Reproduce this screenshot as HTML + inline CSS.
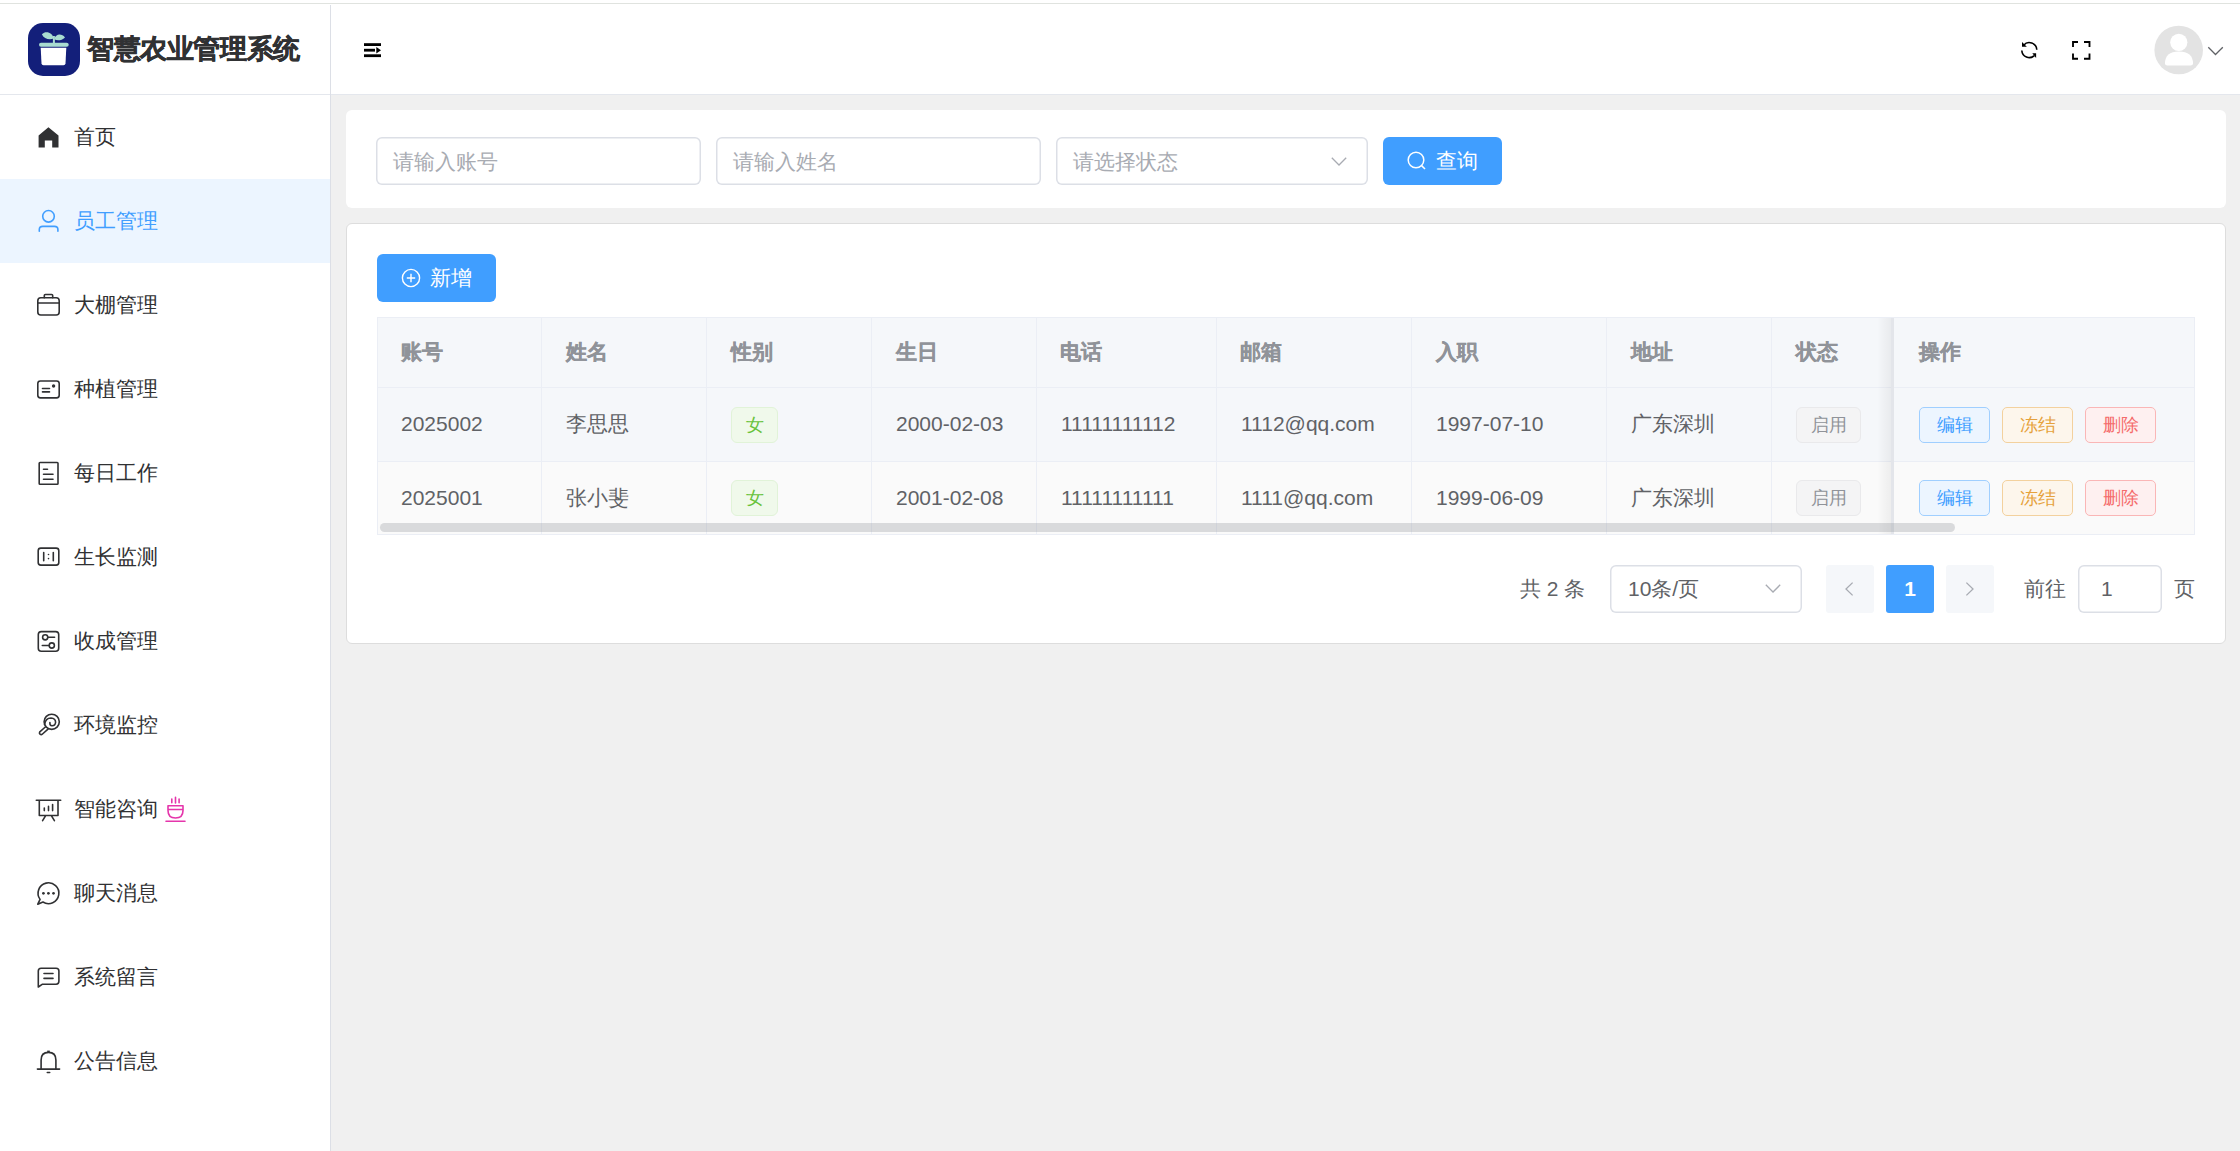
<!DOCTYPE html>
<html><head><meta charset="utf-8">
<style>
*{box-sizing:border-box;margin:0;padding:0}
html,body{width:2240px;height:1151px;overflow:hidden;background:#fff;font-family:"Liberation Sans",sans-serif;color:#303133}
.abs{position:absolute}
#topline{position:absolute;left:0;top:3px;width:2240px;height:1px;background:#e0e3df}
#aside{position:absolute;left:0;top:4px;width:331px;height:1147px;background:#fff;border-right:1px solid #dcdfe6}
#logo{position:absolute;left:0;top:0;width:330px;height:91px;border-bottom:1px solid #e4e7ed}
#logo .title{position:absolute;left:87px;letter-spacing:-0.4px;top:27px;-webkit-text-stroke:0.5px #303133;font-size:27px;font-weight:bold;color:#303133;line-height:36px;white-space:nowrap}
.menu{position:absolute;left:0;width:330px;height:84px}
.menu.active{background:#ecf5ff}
.menu .t{position:absolute;left:74px;top:0;line-height:84px;font-size:21px;color:#303133;white-space:nowrap}
.menu.active .t{color:#409eff}
.menu svg{position:absolute;left:0;top:0}
#header{position:absolute;left:331px;top:4px;width:1909px;height:91px;background:#fff;border-bottom:1px solid #e4e7ed}
#main{position:absolute;left:331px;top:95px;width:1909px;height:1056px;background:#f0f0f0}
.card{position:absolute;background:#fff;border-radius:6px}
.inp{position:absolute;height:48px;box-shadow:inset 0 0 0 1.5px #dcdfe6;border-radius:6px;background:#fff}
.inp .ph{position:absolute;left:17px;top:1px;line-height:48px;font-size:21px;color:#a8abb2;white-space:nowrap}
.btn{position:absolute;height:48px;border-radius:6px;background:#409eff;color:#fff;font-size:21px}
.btn .t{position:absolute;line-height:48px;top:0;white-space:nowrap}
table{border-collapse:collapse}
.th{position:absolute;font-size:21px;font-weight:bold;color:#909399;-webkit-text-stroke:0.3px #909399;line-height:30px;white-space:nowrap}
.td{position:absolute;font-size:21px;color:#606266;line-height:30px;white-space:nowrap}
.vl{position:absolute;width:1px;background:#ebeef5}
.hl{position:absolute;height:1px;background:#ebeef5}
.tag{position:absolute;height:36px;border-radius:6px;font-size:18px;line-height:34px;text-align:center;border:1px solid}
.tg{background:#f0f9eb;border-color:#e1f3d8;color:#67c23a}
.ti{background:#f4f4f5;border-color:#e9e9eb;color:#909399}
.ob{position:absolute;height:36px;width:71px;border-radius:5px;font-size:18px;line-height:34px;text-align:center;border:1px solid}
.ob.p{background:#ecf5ff;border-color:#a0cfff;color:#409eff}
.ob.w{background:#fdf6ec;border-color:#f3d19e;color:#e6a23c}
.ob.d{background:#fef0f0;border-color:#fab6b6;color:#f56c6c}
.pg{position:absolute;font-size:21px;color:#606266;line-height:30px;white-space:nowrap}
</style></head><body>
<div id="topline"></div>

<div id="aside">
  <div id="logo">
    <svg class="abs" style="left:28px;top:19px" width="52" height="53" viewBox="0 0 52 53">
      <rect x="0" y="0" width="52" height="53" rx="15" fill="#131f7a"/>
      <path d="M12.7 24.8 L38.3 24.8 L37.5 40.5 Q37.3 42.2 35.5 42.2 L15.5 42.2 Q13.7 42.2 13.5 40.5 Z" fill="#fff"/>
      <rect x="11" y="19.7" width="29.7" height="4" rx="2" fill="#a9dcd0"/>
      <rect x="24.9" y="13" width="2" height="7" fill="#a9dcd0"/>
      <path d="M25.6 15.6 C24.8 9.2 17.5 7.3 13.9 11.2 C15.6 15.6 21.2 17.4 25.6 15.6Z" fill="#a9dcd0"/>
      <path d="M26.3 16.2 C27.6 10.6 33.6 10.2 37 14.4 C33.8 17.6 29 18 26.3 16.2Z" fill="#a9dcd0"/>
    </svg>
    <div class="title">智慧农业管理系统</div>
  </div>
</div>

<div class="menu" style="top:95px"><div class="t">首页</div></div>
<div class="menu active" style="top:179px"><div class="t">员工管理</div></div>
<div class="menu" style="top:263px"><div class="t">大棚管理</div></div>
<div class="menu" style="top:347px"><div class="t">种植管理</div></div>
<div class="menu" style="top:431px"><div class="t">每日工作</div></div>
<div class="menu" style="top:515px"><div class="t">生长监测</div></div>
<div class="menu" style="top:599px"><div class="t">收成管理</div></div>
<div class="menu" style="top:683px"><div class="t">环境监控</div></div>
<div class="menu" style="top:767px"><div class="t">智能咨询</div></div>
<div class="menu" style="top:851px"><div class="t">聊天消息</div></div>
<div class="menu" style="top:935px"><div class="t">系统留言</div></div>
<div class="menu" style="top:1019px"><div class="t">公告信息</div></div>
<svg class="abs" style="left:0;top:0;pointer-events:none" width="331" height="1151" viewBox="0 0 331 1151" fill="none" stroke="#303133" stroke-width="1.6" stroke-linecap="round" stroke-linejoin="round">
<path d="M48.4 127.3 L58.5 135.4 L58.5 147.6 L52.2 147.6 L52.2 140.6 L44.8 140.6 L44.8 147.6 L38.6 147.6 L38.6 135.4 Z" fill="#303133" stroke="none"/>
<g stroke="#409eff"><circle cx="48.5" cy="216.3" r="5.8"/><path d="M39.3 231.3 V229.5 Q39.3 226.4 42.8 226.4 H54.4 Q57.9 226.4 57.9 229.5 V231.3"/></g>
<rect x="37.8" y="297.8" width="21.4" height="17.2" rx="3"/><path d="M37.8 303 H59.2"/><path d="M44.3 297.8 V295.6 Q44.3 294.5 45.4 294.5 H51.6 Q52.7 294.5 52.7 295.6 V297.8"/>
<rect x="37.8" y="381" width="21.4" height="16.9" rx="2.6"/><path d="M42.5 388.5 H49.5 M42.5 391.9 H49.5"/><circle cx="53.6" cy="386" r="0.9" fill="#303133"/>
<rect x="39.2" y="462.5" width="18.8" height="21.7" rx="0.8"/><path d="M43.5 469.3 H47.5 M43.5 474.3 H53 M43.5 479.3 H53"/>
<rect x="38.2" y="548.1" width="20.6" height="17" rx="2.6"/><path d="M43.7 552.5 V560.8 M53.3 552.5 V560.8"/><circle cx="48.5" cy="554.5" r="0.8" fill="#303133" stroke="none"/><circle cx="48.5" cy="558.6" r="0.8" fill="#303133" stroke="none"/>
<rect x="38.3" y="631.6" width="20.4" height="19.6" rx="3"/><circle cx="45.2" cy="637.3" r="2.6"/><path d="M47.8 637.3 H54.6"/><circle cx="51.8" cy="645.5" r="2.6"/><path d="M49.2 645.5 H42.3"/>
<circle cx="51.7" cy="721.8" r="7.6"/><path d="M44.6 724.5 Q45.5 718 51 718 Q55.5 718.3 55.6 722.3 Q55.3 726 51.8 725.8 Q49.8 725.6 49.9 723.3 L49.9 722.6"/><path d="M45.3 727 L39.8 731.8 Q38.8 733.2 40.2 734.4 Q41.4 735 42.5 734 L48 729.2"/>
<path d="M36.3 800.2 H60.7 M39.3 800.2 V815.5 H58 V800.2 M44.3 808.1 V810.6 M48.5 806.4 V810.6 M52.6 804.5 V810.6 M45.5 815.8 L42.6 820.7 M51.5 815.8 L54.4 820.7"/>
<path d="M40.07 899.35 A10.4 10.4 0 1 1 42.94 902.03 L37.8 904.2 Z"/><circle cx="43.4" cy="893.3" r="1.35" fill="#303133" stroke="none"/><circle cx="48.4" cy="893.3" r="1.35" fill="#303133" stroke="none"/><circle cx="53.5" cy="893.3" r="1.35" fill="#303133" stroke="none"/>
<path d="M38.3 987 V971.1 Q38.3 968.3 41.1 968.3 H56.1 Q58.9 968.3 58.9 971.1 V981.3 Q58.9 984.2 56.1 984.2 H42.5 Z"/><path d="M44 973.5 H53 M44 978.4 H53"/>
<path d="M37.4 1069.1 H59.6 M41.1 1069 V1060 Q41.1 1052.4 48.5 1052.4 Q55.9 1052.4 55.9 1060 V1069 M47.3 1072.5 H49.7"/><path d="M48.5 1050.6 V1052.4" stroke-width="2.6" stroke-linecap="butt"/>
<g stroke="#e535ab"><path d="M171.8 799 V802.7 M175.5 797.2 V803 M179.1 799 V802.7 M168 805.7 H183 V810.5 Q183 818 175.5 818 Q168 818 168 810.5 Z M168 809.5 H183 M166 821.2 H185"/></g>
</svg>
<div id="header"></div>
<div class="abs" style="left:330px;top:4px;width:1px;height:1px;background:#fff"></div>
<svg class="abs" style="left:0;top:0" width="2240" height="95" viewBox="0 0 2240 95">
  <g fill="#000">
    <rect x="364" y="43.2" width="17" height="2.8"/>
    <rect x="364" y="48.8" width="11" height="2.8"/>
    <path d="M376.3 47 L381 50.2 L376.3 53.4 Z"/>
    <rect x="364" y="54.3" width="17" height="2.8"/>
  </g>
  <g fill="none" stroke="#000" stroke-width="1.6">
    <path d="M2036.79 49.71 A7.5 7.5 0 0 0 2023.64 45.18"/>
    <path d="M2021.81 50.49 A7.5 7.5 0 0 0 2034.35 55.64"/>
    <path d="M2073 47 V42 H2078 M2084 42 H2089.5 V47 M2073 53.5 V58.7 H2078 M2084 58.7 H2089.5 V53.5" stroke-width="1.85" stroke-linecap="butt" stroke-linejoin="miter"/>
  </g>
  <path d="M2022 42 L2022 46.8 L2026.8 46.8 Z" fill="#000"/>
  <path d="M2032.3 53.3 L2036.1 53.3 L2036.1 58.1 Z" fill="#000"/>
  <circle cx="2178.7" cy="50" r="24.3" fill="#e3e3e3"/>
  <circle cx="2178.8" cy="42.3" r="8.6" fill="#fff"/>
  <path d="M2165 63.5 Q2165 51.5 2178.8 51.5 Q2193 51.5 2193 63.5 Q2193 65.6 2190.5 65.6 L2167.3 65.6 Q2165 65.6 2165 63.5 Z" fill="#fff"/>
  <path d="M2208.3 47.3 L2215.5 54.5 L2222.8 47.3" fill="none" stroke="#606266" stroke-width="1.3"/>
</svg>
<div id="main"></div>
<div class="card" style="left:346px;top:110px;width:1880px;height:98px"></div>
<div class="inp" style="left:376px;top:137px;width:325px"><div class="ph">请输入账号</div></div>
<div class="inp" style="left:716px;top:137px;width:325px"><div class="ph">请输入姓名</div></div>
<div class="inp" style="left:1056px;top:137px;width:312px"><div class="ph">请选择状态</div><svg class="abs" style="left:275px;top:20px" width="16" height="9" viewBox="0 0 16 9"><path d="M0.8 0.8 L8 8 L15.2 0.8" fill="none" stroke="#a8abb2" stroke-width="1.3"/></svg></div>
<div class="btn" style="left:1383px;top:137px;width:119px"><svg class="abs" style="left:24px;top:14px" width="20" height="20" viewBox="0 0 20 20"><circle cx="9" cy="9" r="7.8" fill="none" stroke="#fff" stroke-width="1.5"/><path d="M14.6 14.6 L18 18" stroke="#fff" stroke-width="1.5"/></svg><div class="t" style="left:53px">查询</div></div>
<div class="card" style="left:346px;top:223px;width:1880px;height:421px;border:1px solid #dddddd"></div>
<div class="btn" style="left:377px;top:254px;width:119px"><svg class="abs" style="left:24px;top:14px" width="20" height="20" viewBox="0 0 20 20"><circle cx="10" cy="10" r="8.6" fill="none" stroke="#fff" stroke-width="1.4"/><path d="M10 5.8 V14.2 M5.8 10 H14.2" stroke="#fff" stroke-width="1.4"/></svg><div class="t" style="left:53px">新增</div></div>
<div class="abs" style="left:377px;top:317px;width:1818px;height:218px;background:#fff;border:1px solid #ebeef5"></div>
<div class="abs" style="left:378px;top:318px;width:1816px;height:69px;background:#f5f7fa"></div>
<div class="abs" style="left:378px;top:388px;width:1816px;height:73px;background:#f5f7fa"></div>
<div class="abs" style="left:378px;top:462px;width:1816px;height:72px;background:#fafafa"></div>
<div class="hl" style="left:378px;top:387px;width:1816px"></div>
<div class="hl" style="left:378px;top:461px;width:1816px"></div>
<div class="vl" style="left:541px;top:318px;height:216px"></div>
<div class="vl" style="left:706px;top:318px;height:216px"></div>
<div class="vl" style="left:871px;top:318px;height:216px"></div>
<div class="vl" style="left:1036px;top:318px;height:216px"></div>
<div class="vl" style="left:1216px;top:318px;height:216px"></div>
<div class="vl" style="left:1411px;top:318px;height:216px"></div>
<div class="vl" style="left:1606px;top:318px;height:216px"></div>
<div class="vl" style="left:1771px;top:318px;height:216px"></div>
<div class="abs" style="left:1877px;top:318px;width:14px;height:216px;background:linear-gradient(to right,rgba(0,0,0,0),rgba(0,0,0,0.05))"></div>
<div class="abs" style="left:1891px;top:318px;width:3px;height:216px;background:#e3e5ea"></div>
<div class="th" style="left:401px;top:337px">账号</div>
<div class="th" style="left:566px;top:337px">姓名</div>
<div class="th" style="left:731px;top:337px">性别</div>
<div class="th" style="left:896px;top:337px">生日</div>
<div class="th" style="left:1060px;top:337px">电话</div>
<div class="th" style="left:1240px;top:337px">邮箱</div>
<div class="th" style="left:1436px;top:337px">入职</div>
<div class="th" style="left:1631px;top:337px">地址</div>
<div class="th" style="left:1796px;top:337px">状态</div>
<div class="th" style="left:1919px;top:337px">操作</div>
<div class="td" style="left:401px;top:409px">2025002</div>
<div class="td" style="left:566px;top:409px">李思思</div>
<div class="td" style="left:896px;top:409px">2000-02-03</div>
<div class="td" style="left:1061px;top:409px">11111111112</div>
<div class="td" style="left:1241px;top:409px">1112@qq.com</div>
<div class="td" style="left:1436px;top:409px">1997-07-10</div>
<div class="td" style="left:1631px;top:409px">广东深圳</div>
<div class="tag tg" style="left:731px;top:407px;width:47px">女</div>
<div class="tag ti" style="left:1796px;top:407px;width:65px">启用</div>
<div class="ob p" style="left:1919px;top:407px">编辑</div>
<div class="ob w" style="left:2002px;top:407px">冻结</div>
<div class="ob d" style="left:2085px;top:407px">删除</div>
<div class="td" style="left:401px;top:483px">2025001</div>
<div class="td" style="left:566px;top:483px">张小斐</div>
<div class="td" style="left:896px;top:483px">2001-02-08</div>
<div class="td" style="left:1061px;top:483px">11111111111</div>
<div class="td" style="left:1241px;top:483px">1111@qq.com</div>
<div class="td" style="left:1436px;top:483px">1999-06-09</div>
<div class="td" style="left:1631px;top:483px">广东深圳</div>
<div class="tag tg" style="left:731px;top:480px;width:47px">女</div>
<div class="tag ti" style="left:1796px;top:480px;width:65px">启用</div>
<div class="ob p" style="left:1919px;top:480px">编辑</div>
<div class="ob w" style="left:2002px;top:480px">冻结</div>
<div class="ob d" style="left:2085px;top:480px">删除</div>
<div class="abs" style="left:380px;top:523px;width:1575px;height:9px;border-radius:5px;background:rgba(144,147,153,0.3)"></div>
<div class="pg" style="left:1520px;top:574px">共 2 条</div>
<div class="inp" style="left:1610px;top:565px;width:192px"><div class="pg" style="left:18px;top:9px;color:#606266">10条/页</div><svg class="abs" style="left:155px;top:19px" width="16" height="9" viewBox="0 0 16 9"><path d="M0.8 0.8 L8 8 L15.2 0.8" fill="none" stroke="#a8abb2" stroke-width="1.3"/></svg></div>
<div class="abs" style="left:1826px;top:565px;width:48px;height:48px;border-radius:3px;background:#f5f7fa"><svg class="abs" style="left:19px;top:17px" width="10" height="15" viewBox="0 0 10 15"><path d="M7.6 0.6 L1 7 L7.6 13.4" fill="none" stroke="#a8abb2" stroke-width="1.3"/></svg></div>
<div class="abs" style="left:1886px;top:565px;width:48px;height:48px;border-radius:3px;background:#409eff;color:#fff;font-size:21px;font-weight:bold;text-align:center;line-height:48px">1</div>
<div class="abs" style="left:1946px;top:565px;width:48px;height:48px;border-radius:3px;background:#f5f7fa"><svg class="abs" style="left:19px;top:17px" width="10" height="15" viewBox="0 0 10 15"><path d="M1.4 0.6 L8 7 L1.4 13.4" fill="none" stroke="#a8abb2" stroke-width="1.3"/></svg></div>
<div class="pg" style="left:2024px;top:574px">前往</div>
<div class="inp" style="left:2078px;top:565px;width:84px"><div class="pg" style="left:23px;top:9px">1</div></div>
<div class="pg" style="left:2174px;top:574px">页</div>
</body></html>
